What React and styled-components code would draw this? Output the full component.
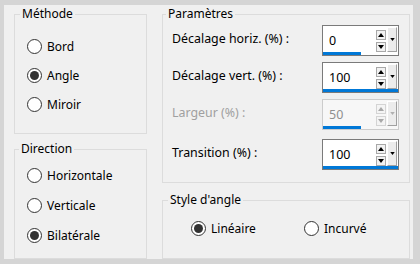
import React from 'react';
import styled, { createGlobalStyle } from 'styled-components';

const GlobalStyle = createGlobalStyle`
  html, body {
    margin: 0;
    padding: 0;
    background: #d5d5d5;
  }
  body {
    font-family: 'Noto Sans', 'Open Sans', sans-serif;
    font-size: 12px;
    color: #000;
  }
`;

// fenêtre de dialogue
const Dialog = styled.div`
  margin: 5px 7px 5px 4px;
  height: 254px;
  background: #f0f0f0;
  box-sizing: border-box;
  padding: 1px 3px 0 10px;
  display: grid;
  grid-template-columns: 133px 248px;
  column-gap: 15px;
`;

const Column = styled.div`
  display: flex;
  flex-direction: column;
  gap: ${p => p.$gap}px;
`;

const Group = styled.fieldset`
  margin: 0;
  padding: 0;
  min-width: 0;
  height: ${p => p.$h}px;
  box-sizing: border-box;
  border: 1px solid #dcdcdc;
`;

const Legend = styled.legend`
  margin-left: ${p => p.$ml ?? 5}px;
  padding: 0 2px;
  line-height: 16px;
  font-size: 12px;
`;

const RadioList = styled.div`
  display: flex;
  flex-direction: column;
  padding: ${p => p.$pad};
`;

const RadioRow = styled.label`
  display: flex;
  align-items: center;
  gap: 5px;
  height: ${p => p.$h}px;
`;

const Circle = styled.span`
  width: 15px;
  height: 15px;
  box-sizing: border-box;
  border-radius: 50%;
  border: 1px solid #333;
  background: #fff;
  display: flex;
  align-items: center;
  justify-content: center;
  flex: none;

  &::after {
    content: '';
    width: 9px;
    height: 9px;
    border-radius: 50%;
    background: ${p => (p.$on ? '#333' : 'transparent')};
  }
`;

const Radio = ({ on, h = 29, children }) => (
  <RadioRow $h={h}>
    <Circle $on={on} />
    <span>{children}</span>
  </RadioRow>
);

const ParamList = styled.div`
  display: flex;
  flex-direction: column;
  padding: 0 10px 0 9px;
`;

const ParamRow = styled.div`
  display: flex;
  align-items: center;
  height: 31px;
  margin-top: ${p => p.$mt}px;
`;

const Label = styled.span`
  flex: 1;
  margin-bottom: 4px;
  font-size: 12.4px;
  color: ${p => (p.$off ? '#a0a0a0' : '#000')};
`;

const SpinBox = styled.div`
  width: 77px;
  height: 31px;
  box-sizing: border-box;
  border: 1px solid ${p => (p.$off ? '#cccccc' : '#7a7a7a')};
  background: ${p => (p.$off ? '#f7f7f7' : '#fff')};
  display: flex;
  flex-direction: column;
`;

const SpinTop = styled.div`
  display: flex;
  height: 26px;
`;

const Value = styled.div`
  width: 53px;
  padding-left: 6px;
  box-sizing: border-box;
  display: flex;
  align-items: center;
  padding-top: 3px;
  font-size: 12.5px;
  color: ${p => (p.$off ? '#8f8f8f' : '#000')};
`;

const Arrows = styled.div`
  width: 10px;
  padding-top: 4px;
  display: flex;
  flex-direction: column;
  gap: 2px;
`;

const ArrowBtn = styled.div`
  height: 10px;
  box-sizing: border-box;
  border: 1px solid ${p => (p.$off ? '#d4d4d4' : '#a8a8a8')};
  background: ${p => (p.$off ? '#f4f4f4' : '#f2f2f2')};
  display: flex;
  align-items: center;
  justify-content: center;
`;

const Drop = styled.div`
  width: 10px;
  height: 25px;
  margin: 1px 1px 0 1px;
  box-sizing: border-box;
  background: #ececec;
  border-top: 1px solid #fff;
  border-left: 1px solid #fff;
  border-right: 1px solid #a0a0a0;
  border-bottom: 1px solid #a0a0a0;
  display: flex;
  align-items: center;
  justify-content: center;
`;

const Track = styled.div`
  height: 3px;
`;

const Fill = styled.div`
  height: 3px;
  background: #0078d7;
`;

const Tri = ({ down, color = '#000', w = 6, h = 4 }) => (
  <svg width={w} height={h} viewBox="0 0 6 4">
    <polygon points={down ? '0,0 6,0 3,4' : '0,4 6,4 3,0'} fill={color} />
  </svg>
);

const Spin = ({ value, min, max, off }) => {
  const pct = ((value - min) / (max - min)) * 100;
  const c = off ? '#a8a8a8' : '#000';
  return (
    <SpinBox $off={off}>
      <SpinTop>
        <Value $off={off}>{value}</Value>
        <Arrows>
          <ArrowBtn $off={off}><Tri color={c} /></ArrowBtn>
          <ArrowBtn $off={off}><Tri down color={c} /></ArrowBtn>
        </Arrows>
        <Drop>
          <Tri down w={5} h={3} color={off ? '#b0b0b0' : '#000'} />
        </Drop>
      </SpinTop>
      <Track>
        <Fill style={{ width: `${pct}%` }} />
      </Track>
    </SpinBox>
  );
};

const StyleRow = styled.div`
  display: grid;
  grid-template-columns: 113px auto;
  padding: 8px 0 0 28px;
`;

const params = [
  { label: 'Décalage horiz. (%) :', value: 0, min: -100, max: 100, mt: 3 },
  { label: 'Décalage vert. (%) :', value: 100, min: -100, max: 100, mt: 6 },
  { label: 'Largeur (%) :', value: 50, min: 0, max: 100, mt: 6, off: true },
  { label: 'Transition (%) :', value: 100, min: 0, max: 100, mt: 9 },
];

export default function App() {
  return (
    <>
      <GlobalStyle />
      <Dialog>
        <Column $gap={7}>
          <Group $h={128}>
            <Legend>Méthode</Legend>
            <RadioList $pad="10px 0 0 12px">
              <Radio>Bord</Radio>
              <Radio on>Angle</Radio>
              <Radio>Miroir</Radio>
            </RadioList>
          </Group>
          <Group $h={118}>
            <Legend $ml={4}>Direction</Legend>
            <RadioList $pad="3px 0 0 12px">
              <Radio h={30}>Horizontale</Radio>
              <Radio h={30}>Verticale</Radio>
              <Radio h={30} on>Bilatérale</Radio>
            </RadioList>
          </Group>
        </Column>
        <Column $gap={9}>
          <Group $h={177}>
            <Legend $ml={3}>Paramètres</Legend>
            <ParamList>
              {params.map(p => (
                <ParamRow key={p.label} $mt={p.mt}>
                  <Label $off={p.off}>{p.label}</Label>
                  <Spin value={p.value} min={p.min} max={p.max} off={p.off} />
                </ParamRow>
              ))}
            </ParamList>
          </Group>
          <Group $h={67}>
            <Legend $ml={5}>Style d'angle</Legend>
            <StyleRow>
              <Radio h={24} on>Linéaire</Radio>
              <Radio h={24}>Incurvé</Radio>
            </StyleRow>
          </Group>
        </Column>
      </Dialog>
    </>
  );
}
